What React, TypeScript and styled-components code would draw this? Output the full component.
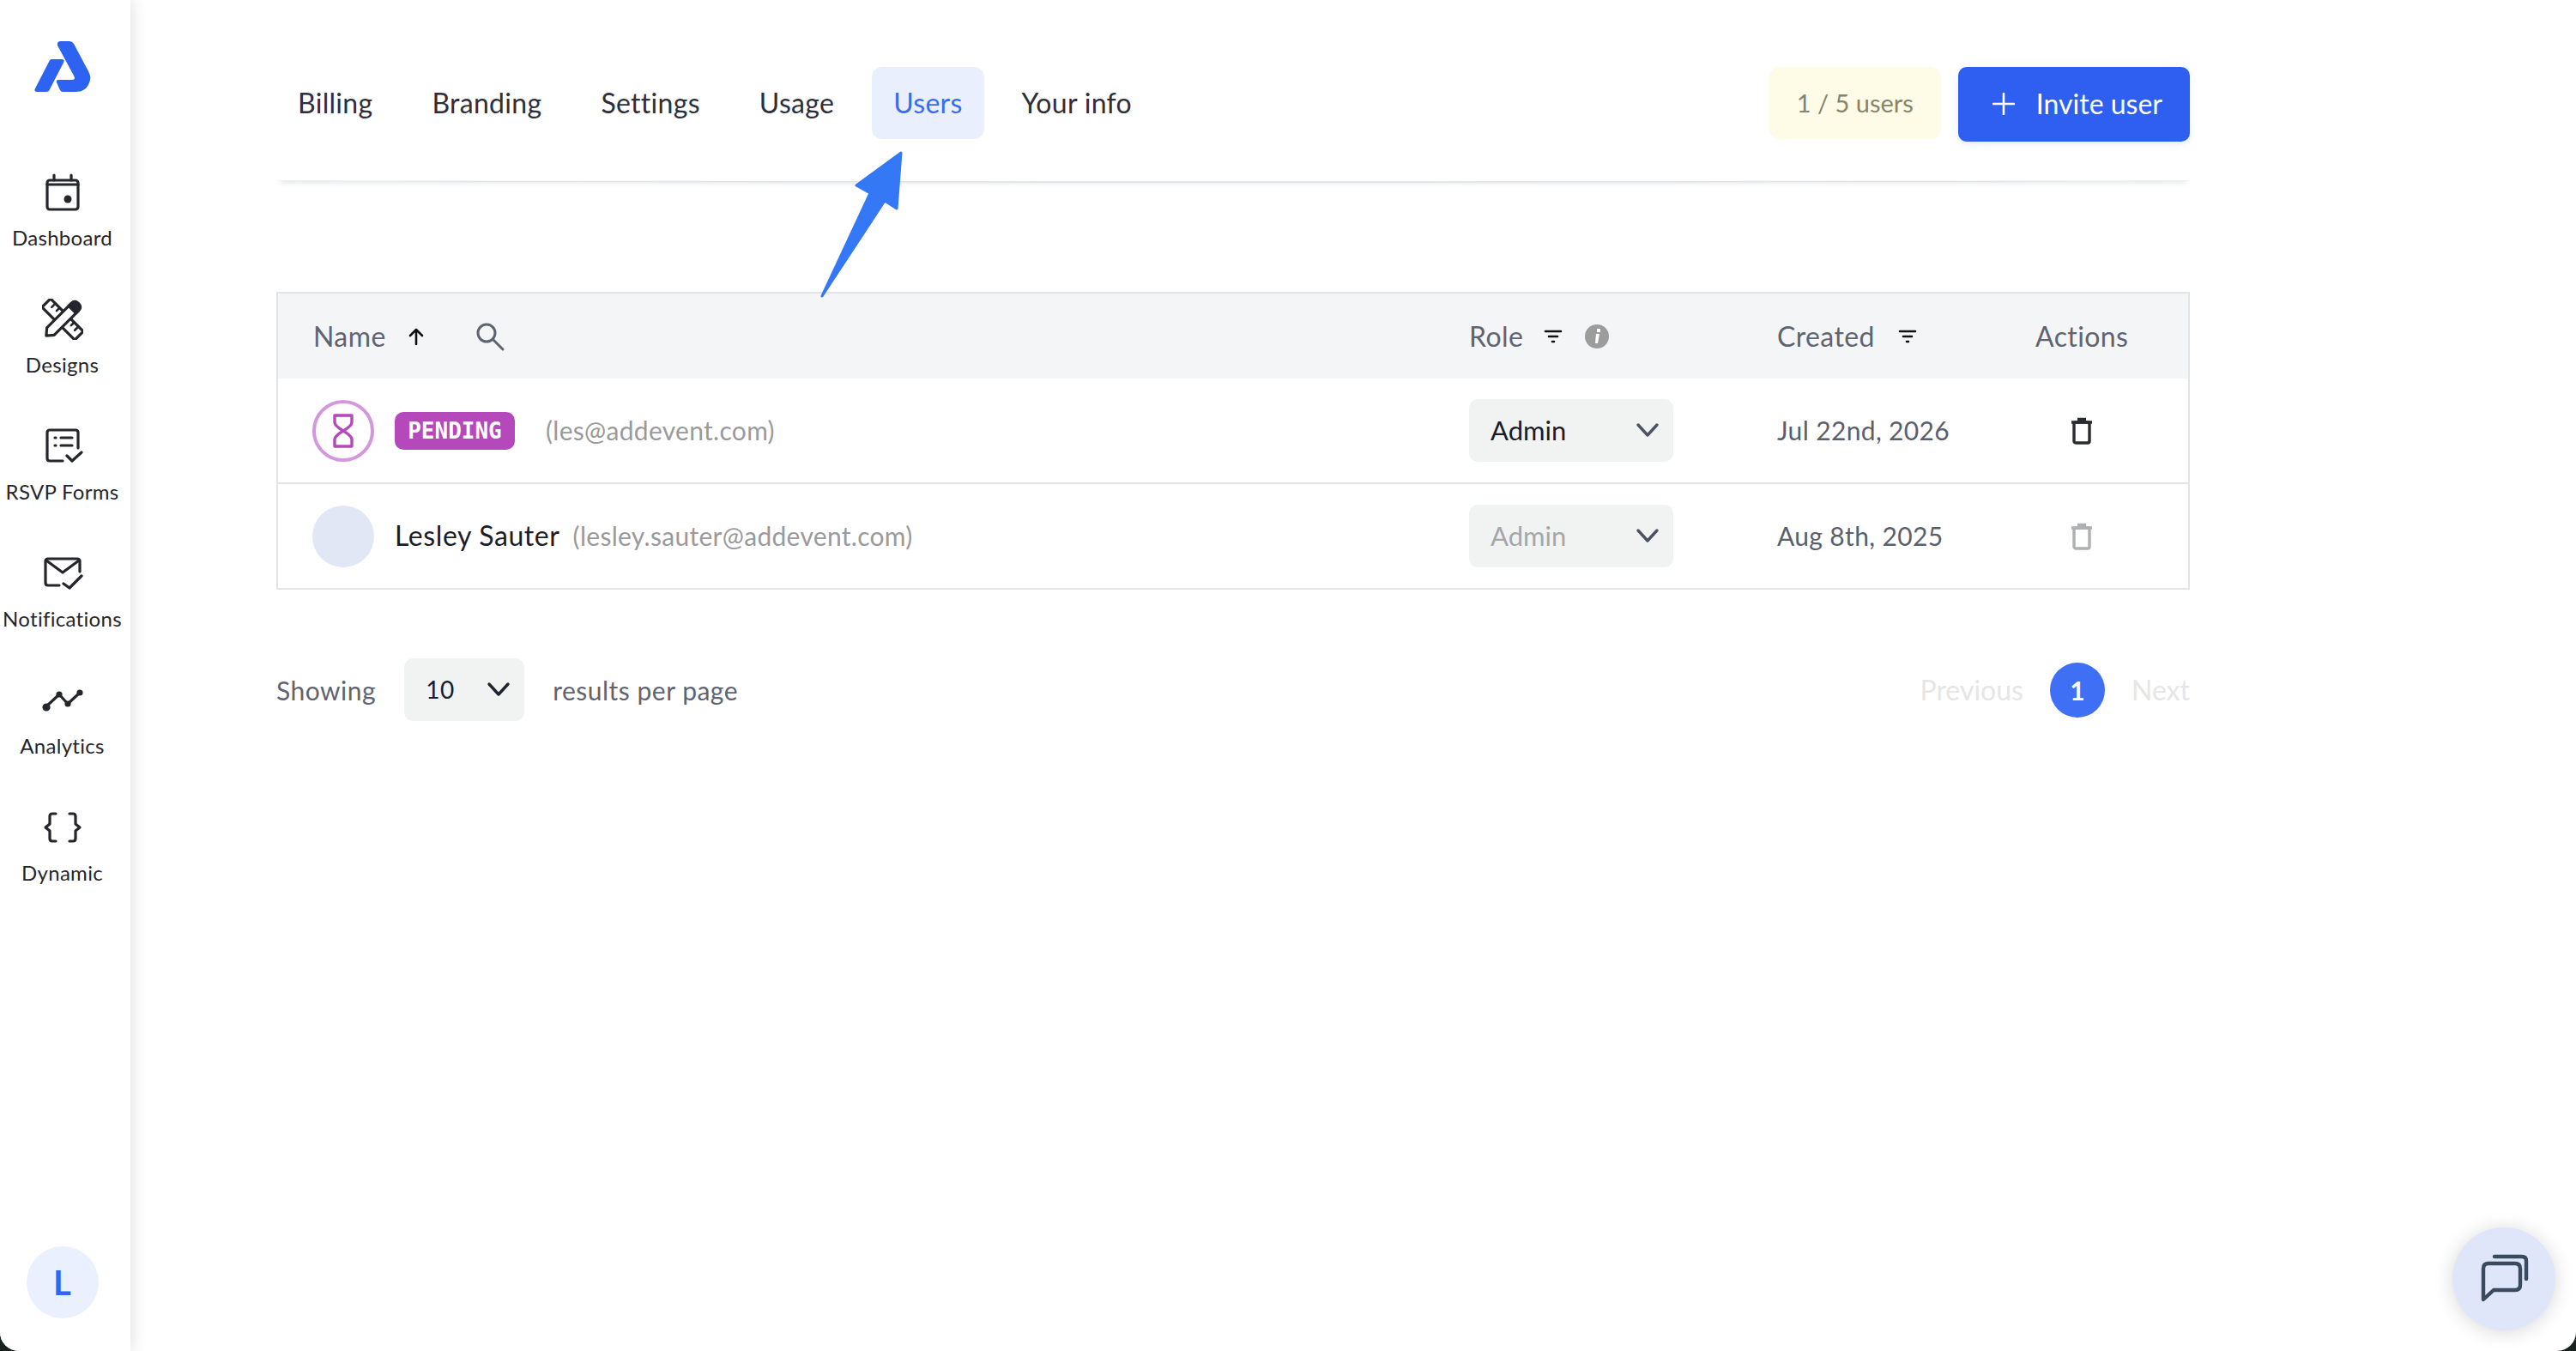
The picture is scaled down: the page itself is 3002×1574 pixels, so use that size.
import React from "react";
import styled, { createGlobalStyle } from "styled-components";

const GlobalStyle = createGlobalStyle`
  * { box-sizing: border-box; }
  html, body { margin: 0; padding: 0; background: #18221e; }
  body { font-family: "Lato", "Liberation Sans", sans-serif; color: #2d2f3c; }
`;

const Frame = styled.div`
  position: relative;
  display: flex;
  width: 3002px;
  height: 1574px;
  overflow: hidden;
  background: #fff;
  border-radius: 0 0 22px 22px;
`;

const Sidebar = styled.aside`
  display: flex;
  flex-direction: column;
  align-items: center;
  flex: 0 0 152px;
  padding: 47px 7px 38px 0;
  background: #fff;
  box-shadow: 0 0 18px rgba(20, 20, 40, 0.16);
`;

const LogoMark = styled.svg`
  width: 66px;
  height: 61px;
  margin-bottom: 92px;
  fill: #2e62f0;
`;

const NavList = styled.nav`
  display: flex;
  flex-direction: column;
  width: 100%;
`;

const NavItem = styled.a`
  display: flex;
  flex-direction: column;
  align-items: center;
  height: 148px;
  gap: 13px;
  font-size: 24px;
  line-height: 32px;
  letter-spacing: 0.3px;
  color: #25262c;
  white-space: nowrap;
`;

const NavIcon = styled.svg`
  width: 48px;
  height: 48px;
  fill: none;
  stroke: #25262c;
  stroke-width: 3.2;
  stroke-linecap: round;
  stroke-linejoin: round;
`;

const UserBubble = styled.div`
  display: flex;
  align-items: center;
  justify-content: center;
  width: 84px;
  height: 84px;
  margin-top: auto;
  border-radius: 50%;
  background: #eaf0fd;
  color: #2f66f5;
  font-size: 40px;
  font-weight: 700;
`;

const Main = styled.main`
  flex: 0 0 2230px;
  margin-left: 170px;
  padding-top: 78px;
`;

const TopBar = styled.header`
  display: flex;
  align-items: flex-start;
  justify-content: space-between;
  height: 135px;
  border-bottom: 2px solid #e2e4e9;
  box-shadow: 0 5px 6px -5px rgba(60, 70, 100, 0.14);
  border-radius: 0 0 50% 50% / 0 0 3px 3px;
`;

const Tabs = styled.div`
  display: flex;
  gap: 19px;
`;

const Tab = styled.a<{ $active?: boolean }>`
  display: flex;
  align-items: center;
  height: 84px;
  padding: 0 25px 2px;
  border-radius: 12px;
  font-size: 32px;
  letter-spacing: 0.3px;
  color: ${(p) => (p.$active ? "#3a6cf0" : "#2d2f3c")};
  background: ${(p) => (p.$active ? "#e9effd" : "transparent")};
`;

const TopActions = styled.div`
  display: flex;
  gap: 20px;
`;

const SeatCount = styled.div`
  display: flex;
  align-items: center;
  height: 84px;
  padding: 0 32px 2px;
  border-radius: 12px;
  background: #fefce6;
  color: #85846f;
  font-size: 29px;
`;

const InviteButton = styled.button`
  display: flex;
  align-items: center;
  gap: 25px;
  height: 87px;
  padding: 0 32px 2px 40px;
  border: 0;
  border-radius: 10px;
  background: #2e5ff0;
  color: #fff;
  font-family: inherit;
  font-size: 32px;
  box-shadow: 0 3px 6px rgba(46, 95, 240, 0.12);
`;

const Table = styled.section`
  margin-top: 127px;
  border: 2px solid #e2e4e6;
`;

const Row = styled.div<{ $head?: boolean }>`
  display: grid;
  grid-template-columns: 1347px 359px 301px 1fr;
  align-items: center;
  height: ${(p) => (p.$head ? "99px" : "121px")};
  padding-left: 41px;
  background: ${(p) => (p.$head ? "#f4f5f7" : "#fff")};
  & + & + & {
    border-top: 2px solid #e2e4e6;
    height: 123px;
  }
`;

const HeadCell = styled.div`
  display: flex;
  align-items: center;
  font-size: 32px;
  letter-spacing: 0.4px;
  color: #5f6472;
`;

const HeadIcon = styled.svg<{ $left: number; $size?: number; $tone?: string }>`
  width: ${(p) => p.$size ?? 24}px;
  height: ${(p) => p.$size ?? 24}px;
  margin-left: ${(p) => p.$left}px;
  fill: none;
  stroke: ${(p) => p.$tone ?? "#111"};
  stroke-width: 2.6;
  stroke-linecap: round;
  stroke-linejoin: round;
`;

const NameCell = styled.div`
  display: flex;
  align-items: center;
`;

const Avatar = styled.div<{ $pending?: boolean }>`
  display: flex;
  align-items: center;
  justify-content: center;
  width: 72px;
  height: 72px;
  margin-left: -1px;
  border-radius: 50%;
  background: ${(p) => (p.$pending ? "#fff" : "#e1e7f4")};
  border: ${(p) => (p.$pending ? "4px solid #d496dc" : "0")};
`;

const PendingTag = styled.span`
  display: flex;
  align-items: center;
  justify-content: center;
  width: 140px;
  height: 44px;
  margin: 0 36px 0 24px;
  border-radius: 10px;
  background: #b548bb;
  color: #fff;
  font-family: "DejaVu Sans Mono", "Liberation Mono", monospace;
  font-size: 26px;
  font-weight: 700;
`;

const PersonName = styled.span`
  margin: 0 15px 2px 24px;
  font-size: 32px;
  letter-spacing: 0.6px;
  color: #1a1d29;
`;

const Email = styled.span`
  margin-bottom: 2px;
  font-size: 30px;
  letter-spacing: 0.3px;
  color: #9a9a9c;
`;

const SelectBox = styled.div<{ $width: number; $muted?: boolean; $small?: boolean }>`
  display: flex;
  align-items: center;
  justify-content: space-between;
  width: ${(p) => p.$width}px;
  height: 73px;
  padding: 0 16px 2px 25px;
  border-radius: 10px;
  background: #f1f3f3;
  font-size: ${(p) => (p.$small ? 28 : 31)}px;
  color: ${(p) => (p.$muted ? "#a4a7aa" : "#1a1d29")};
`;

const Chevron = styled.svg<{ $dark?: boolean }>`
  width: 28px;
  height: 18px;
  fill: none;
  stroke: ${(p) => (p.$dark ? "#1f2430" : "#4b5160")};
  stroke-width: 3.4;
  stroke-linecap: round;
  stroke-linejoin: round;
`;

const DateCell = styled.div`
  margin-bottom: 2px;
  font-size: 30px;
  letter-spacing: 0.35px;
  color: #5a5f6e;
`;

const TrashCell = styled.div`
  display: flex;
  width: 108px;
  justify-content: center;
`;

const TrashIcon = styled.svg<{ $muted?: boolean }>`
  width: 26px;
  height: 32px;
  fill: none;
  stroke: ${(p) => (p.$muted ? "#aeb0b2" : "#2a2b2f")};
  stroke-width: 3.4;
`;

const Footer = styled.div`
  display: flex;
  align-items: center;
  justify-content: space-between;
  margin-top: 80px;
  height: 73px;
`;

const PageSize = styled.div`
  display: flex;
  align-items: center;
  gap: 33px;
  font-size: 30px;
  letter-spacing: 0.5px;
  color: #5f6472;
`;

const Pager = styled.div`
  display: flex;
  align-items: center;
  gap: 31px;
  font-size: 32px;
  color: #e6e6e6;
`;

const PageDot = styled.span`
  display: flex;
  align-items: center;
  justify-content: center;
  width: 64px;
  height: 64px;
  border-radius: 50%;
  background: #3f6ff5;
  color: #fff;
  font-size: 30px;
  font-weight: 700;
`;

const Pointer = styled.svg`
  position: absolute;
  left: 950px;
  top: 170px;
  width: 110px;
  height: 185px;
  fill: #3478f6;
  stroke: #3478f6;
  stroke-width: 3;
  stroke-linejoin: round;
`;

const ChatBubble = styled.button`
  position: absolute;
  right: 24px;
  bottom: 24px;
  display: flex;
  align-items: center;
  justify-content: center;
  width: 120px;
  height: 120px;
  border: 0;
  border-radius: 50%;
  background: #dfe6fa;
  box-shadow: 0 2px 22px rgba(0, 0, 0, 0.16);
`;

const ChatIcon = styled.svg`
  width: 60px;
  height: 60px;
  fill: none;
  stroke: #3a4a5f;
  stroke-width: 4.4;
  stroke-linecap: round;
  stroke-linejoin: round;
`;

const navItems: { label: string; icon: React.ReactNode }[] = [
  {
    label: "Dashboard",
    icon: (
      <>
        <rect x="6" y="10" width="36" height="34" rx="3" />
        <path d="M6 15H42M14 4V10M34 4V10" />
        <circle cx="30" cy="32" r="4.5" fill="#25262c" stroke="none" />
      </>
    ),
  },
  {
    label: "Designs",
    icon: (
      <>
        <g transform="rotate(45 24 24)">
          <rect x="-3" y="17" width="54" height="14" rx="1" />
          <path d="M5 17V23M12 17V22M36 17V22M43 17V23" strokeWidth="2.6" />
        </g>
        <g transform="rotate(-45 24 24)">
          <path d="M-3 24L4 18H44Q50 18 50 24Q50 30 44 30H4Z" fill="#fff" />
          <path d="M40 18H44Q50 18 50 24Q50 30 44 30H40Z" fill="#25262c" />
        </g>
      </>
    ),
  },
  {
    label: "RSVP Forms",
    icon: (
      <>
        <path d="M24 41H9Q6 41 6 38V8Q6 5 9 5H39Q42 5 42 8V26" />
        <path d="M15 14H16M15 23H16M22 14H35M22 23H35" />
        <path d="M29 35L35 41L46 31" />
      </>
    ),
  },
  {
    label: "Notifications",
    icon: (
      <>
        <path d="M20 38H7Q4 38 4 35V10Q4 7 7 7H41Q44 7 44 10V22" />
        <path d="M5 9L24 23L43 9" />
        <path d="M25 36L32 41L46 27" />
      </>
    ),
  },
  {
    label: "Analytics",
    icon: (
      <>
        <path d="M4 32L20 17L30 28L44 15" />
        <circle cx="5" cy="32" r="3" fill="#25262c" />
        <circle cx="20" cy="17" r="2" fill="#25262c" />
        <circle cx="30" cy="28" r="2" fill="#25262c" />
        <circle cx="44" cy="15" r="2" fill="#25262c" />
      </>
    ),
  },
  {
    label: "Dynamic",
    icon: (
      <>
        <path d="M16 8H12Q9 8 9 11V20L4 24L9 28V37Q9 40 12 40H16" />
        <path d="M32 8H36Q39 8 39 11V20L44 24L39 28V37Q39 40 36 40H32" />
      </>
    ),
  },
];

const tabs = ["Billing", "Branding", "Settings", "Usage", "Users", "Your info"];

const FilterGlyph = ({ left }: { left: number }) => (
  <HeadIcon $left={left} viewBox="0 0 24 24">
    <path d="M3 6H21M7 12H17M11 18H13" />
  </HeadIcon>
);

const Caret = ({ dark }: { dark?: boolean }) => (
  <Chevron $dark={dark} viewBox="0 0 28 18">
    <path d="M3 3L14 15L25 3" />
  </Chevron>
);

const Trash = ({ muted }: { muted?: boolean }) => (
  <TrashIcon $muted={muted} viewBox="0 0 26 32">
    <path d="M1 6H25M8 2.5H18" />
    <rect x="4" y="6" width="18" height="24" rx="2" />
  </TrashIcon>
);

export default function App() {
  return (
    <Frame>
      <GlobalStyle />
      <Sidebar>
        <LogoMark viewBox="0 0 66 61">
          <path d="M20 22H32Q36 22 34 26L18 57Q17 60 14 60H3Q-1 60 1 56L17 25Q18 22 20 22Z" />
          <path d="M31 1H41Q44 1 46 4L63 36Q66 42 65 46Q62 60 48 60H33Q31 60 30 58L26 49Q25 46 28 46H44Q48 46 46.5 42L27 6Q26 1 31 1Z" />
        </LogoMark>
        <NavList>
          {navItems.map((item) => (
            <NavItem key={item.label}>
              <NavIcon viewBox="0 0 48 48">{item.icon}</NavIcon>
              {item.label}
            </NavItem>
          ))}
        </NavList>
        <UserBubble>L</UserBubble>
      </Sidebar>

      <Main>
        <TopBar>
          <Tabs>
            {tabs.map((t) => (
              <Tab key={t} $active={t === "Users"}>
                {t}
              </Tab>
            ))}
          </Tabs>
          <TopActions>
            <SeatCount>1 / 5 users</SeatCount>
            <InviteButton>
              <svg width="26" height="26" viewBox="0 0 26 26" stroke="#fff" strokeWidth="2.6" strokeLinecap="round">
                <path d="M13 1V25M1 13H25" />
              </svg>
              Invite user
            </InviteButton>
          </TopActions>
        </TopBar>

        <Table>
          <Row $head>
            <HeadCell>
              Name
              <HeadIcon $left={23} viewBox="0 0 24 24">
                <path d="M12 21V4M5 11L12 4L19 11" />
              </HeadIcon>
              <HeadIcon $left={56} $size={36} $tone="#5f6472" viewBox="0 0 36 36">
                <circle cx="14" cy="14" r="10" strokeWidth="3" />
                <path d="M22 22L33 33" strokeWidth="3" />
              </HeadIcon>
            </HeadCell>
            <HeadCell>
              Role
              <FilterGlyph left={23} />
              <HeadIcon $left={24} $size={30} $tone="none" viewBox="0 0 30 30">
                <circle cx="15" cy="15" r="14" fill="#9c9c9c" />
                <path d="M14 12H18L16 23H13ZM15 6H19V10H15Z" fill="#fff" />
              </HeadIcon>
            </HeadCell>
            <HeadCell>
              Created
              <FilterGlyph left={26} />
            </HeadCell>
            <HeadCell>Actions</HeadCell>
          </Row>

          <Row>
            <NameCell>
              <Avatar $pending>
                <svg width="26" height="40" viewBox="0 0 26 40" fill="none" stroke="#b548bb" strokeWidth="3.4" strokeLinejoin="round">
                  <path d="M3 2H23V10Q23 14 13 20Q3 14 3 10ZM13 20Q23 26 23 30V38H3V30Q3 26 13 20Z" />
                </svg>
              </Avatar>
              <PendingTag>PENDING</PendingTag>
              <Email>(les@addevent.com)</Email>
            </NameCell>
            <SelectBox $width={238}>
              Admin
              <Caret />
            </SelectBox>
            <DateCell>Jul 22nd, 2026</DateCell>
            <TrashCell>
              <Trash />
            </TrashCell>
          </Row>

          <Row>
            <NameCell>
              <Avatar />
              <PersonName>Lesley Sauter</PersonName>
              <Email>(lesley.sauter@addevent.com)</Email>
            </NameCell>
            <SelectBox $width={238} $muted>
              Admin
              <Caret />
            </SelectBox>
            <DateCell>Aug 8th, 2025</DateCell>
            <TrashCell>
              <Trash muted />
            </TrashCell>
          </Row>
        </Table>

        <Footer>
          <PageSize>
            Showing
            <SelectBox $width={140} $small>
              10
              <Caret dark />
            </SelectBox>
            results per page
          </PageSize>
          <Pager>
            <span>Previous</span>
            <PageDot>1</PageDot>
            <span>Next</span>
          </Pager>
        </Footer>
      </Main>

      <Pointer viewBox="0 0 110 185">
        <path d="M100 8L48 46L64 55L8 175L81 64L95 73Z" />
      </Pointer>

      <ChatBubble>
        <ChatIcon viewBox="0 0 60 60">
          <path d="M6 54V18Q6 12 12 12H43Q49 12 49 18V37Q49 43 43 43H18Z" />
          <path d="M19 4H51Q56 4 56 9V30" />
        </ChatIcon>
      </ChatBubble>
    </Frame>
  );
}
